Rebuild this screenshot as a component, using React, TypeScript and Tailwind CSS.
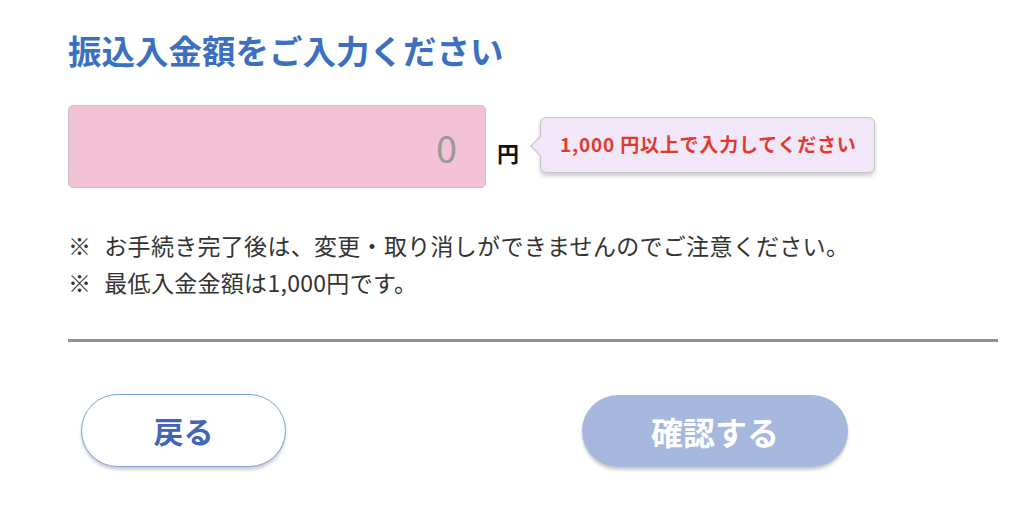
export default function App() {
  return (
    <div
      className="h-[509px] w-[1024px] overflow-hidden bg-white pl-[68px] pt-[30px]"
      style={{ fontFamily: '"Noto Sans CJK JP", "Noto Sans", sans-serif' }}
    >
      <h1 className="text-[33.5px] font-bold leading-[40px] text-[#3b6fc2]">
        振込入金額をご入力ください
      </h1>

      <div className="mt-[35px] flex items-center">
        <div className="flex h-[83px] w-[418px] items-center justify-end rounded-[5px] border border-[#c9c1c5] bg-[#f4c2d6] pr-[28px]">
          <span className="text-[38px] leading-none text-[#999999]">0</span>
        </div>
        <span className="ml-[11px] mt-[10px] text-[22px] font-bold leading-none text-[#111]">
          円
        </span>
        <div className="relative ml-[21px] mb-[4px] flex h-[56px] w-[335px] items-center rounded-[6px] border border-[#c6c2c9] bg-[#f1e7f8] pl-[19px] shadow-[0_3px_4px_rgba(0,0,0,0.2)]">
          <span className="absolute left-[-8px] top-[21px] h-[14px] w-[14px] rotate-45 border-b border-l border-[#c6c2c9] bg-[#f1e7f8]" />
          <span className="relative text-[19px] font-bold tracking-[0.8px] text-[#e2392c]">
            1,000 円以上で入力してください
          </span>
        </div>
      </div>

      <div className="mt-[39px] text-[23px] leading-[37px] tracking-[0.3px] text-[#333]">
        <p>
          <span className="mr-[13px]">※</span>お手続き完了後は、変更・取り消しができませんのでご注意ください。
        </p>
        <p>
          <span className="mr-[13px]">※</span>最低入金金額は1,000円です。
        </p>
      </div>

      <div className="mt-[38px] h-[3px] w-[930px] bg-[#909090]" />

      <div className="mt-[52px] flex items-center gap-[296px] pl-[13px]">
        <button className="flex h-[73px] w-[205px] items-center justify-center rounded-full border-[1.5px] border-[#7f9edb] bg-white text-[30px] font-bold text-[#4166b6] shadow-[0_3px_3px_rgba(0,0,0,0.18)]">
          戻る
        </button>
        <button className="flex h-[72px] w-[266px] items-center justify-center rounded-full bg-[#a7b8de] text-[32px] font-bold text-white shadow-[0_3px_3px_rgba(0,0,0,0.2)]">
          確認する
        </button>
      </div>
    </div>
  );
}
